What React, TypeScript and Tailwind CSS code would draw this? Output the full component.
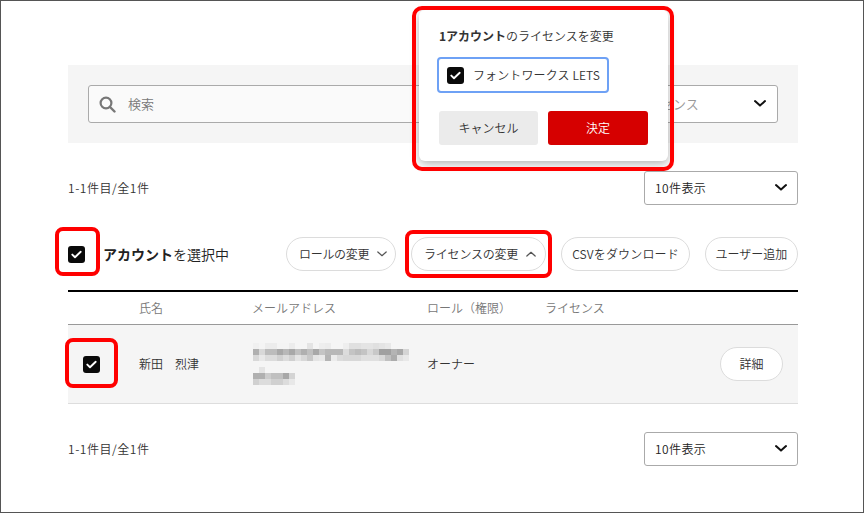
import React from "react";

const font = { fontFamily: '"Noto Sans CJK JP", "Noto Sans", sans-serif' };

function Check({ size = 17 }: { size?: number }) {
  return (
    <span className="inline-flex items-center justify-center rounded-[3px] bg-[#0a0a0a] shrink-0" style={{ width: size, height: size }}>
      <svg width="11" height="9" viewBox="0 0 11 9" fill="none">
        <path d="M1.3 4.6 4 7.2 9.7 1.8" stroke="#fff" strokeWidth="1.9" strokeLinecap="round" strokeLinejoin="round" />
      </svg>
    </span>
  );
}

function Chevron({ up = false, w = 12, color = "#111", sw = 2 }: { up?: boolean; w?: number; color?: string; sw?: number }) {
  return (
    <svg width={w} height={w * 0.6} viewBox="0 0 12 7" fill="none">
      <path d={up ? "M1 6 6 1.5 11 6" : "M1 1 6 5.5 11 1"} stroke={color} strokeWidth={sw} strokeLinecap="round" strokeLinejoin="round" />
    </svg>
  );
}

function Pill({ children, className = "" }: { children: React.ReactNode; className?: string }) {
  return (
    <div className={`h-[34px] rounded-full border border-[#dcdcdc] bg-white flex items-center text-[12px] text-[#333] whitespace-nowrap ${className}`}>
      {children}
    </div>
  );
}

function PageSelect() {
  return (
    <div className="w-[154px] h-[34px] border border-[#aaa] rounded-[3px] bg-white flex items-center justify-between pl-[10px] pr-[10px] text-[12px] text-[#222]">
      <span className="tracking-[0.4px]">10件表示</span>
      <Chevron />
    </div>
  );
}

const mosaicRows: { y: number; cells: string[] }[] = [
  { y: 0, cells: ["f0","f4","ec","ec","f4","f4","ec","f5","f5","e4","f5","ee","ec","f5","f5","ee","e0","e0","e4","e4","e0","e4","e8","f5","f5","f5"] },
  { y: 6, cells: ["b0","d8","bc","bc","a8","b8","a8","c0","b0","c0","a8","c4","b8","b8","b8","dc","c4","bc","c4","d8","c8","a0","a0","b4","a8","d4"] },
  { y: 12, cells: ["d8","e8","dc","dc","d0","dc","d0","e4","d8","c8","e4","e8","b4","ec","dc","d8","d8","d8","e0","e0","e0","d8","c0","ac","e0","e8"] },
  { y: 24, cells: ["f5","e4"] },
  { y: 30, cells: ["b0","b0","cc","c0","c0","a8","d4"] },
  { y: 36, cells: ["d0","dc","dc","d0","d0","dc","e8"] },
];

function Mosaic() {
  return (
    <svg width="156" height="42" viewBox="0 0 156 42" className="block ml-px">
      {mosaicRows.map((r) =>
        r.cells.map((c, i) => <rect key={`${r.y}-${i}`} x={i * 6} y={r.y} width="6" height="6" fill={`#${c}${c}${c}`} />)
      )}
    </svg>
  );
}

export default function App() {
  return (
    <div style={font} className="relative w-[864px] h-[513px] bg-white border border-[#555] overflow-hidden font-[350]">
      <div className="pt-[64px] pl-[67px] pr-[65px]">
        <div className="h-[78px] bg-[#f5f5f5] px-[20px] flex items-center gap-[10px]">
          <div className="w-[340px] flex-1 h-[38px] border border-[#aaa] rounded-[3px] bg-[#fafafa] flex items-center pl-[10px] gap-[12px] text-[13px] text-[#777]">
            <svg width="17" height="17" viewBox="0 0 17 17" fill="none">
              <circle cx="7" cy="7" r="5.4" stroke="#777" strokeWidth="2.2" />
              <path d="M11 11l4.5 4.5" stroke="#777" strokeWidth="2.4" strokeLinecap="round" />
            </svg>
            <span>検索</span>
          </div>
          <div className="w-[280px] h-[38px] border border-[#aaa] rounded-[3px] bg-white flex items-center justify-between pr-[11px] text-[13px] text-[#999]">
            <span className="pl-[135px]">ライセンス</span>
            <Chevron />
          </div>
        </div>

        <div className="mt-[28px] h-[34px] flex items-center justify-between text-[12px] text-[#333]">
          <span className="tracking-[0.55px]">1-1件目/全1件</span>
          <PageSelect />
        </div>

        <div className="mt-[32px] h-[34px] flex items-center">
          <Check />
          <div className="ml-[18px] text-[14px] text-[#222] whitespace-nowrap">
            <span className="font-bold">アカウント</span>を選択中
          </div>
          <div className="ml-auto flex items-center gap-[15px]">
            <Pill className="w-[110px] pl-[12px] gap-[8px]"><span className="tracking-[-0.3px]">ロールの変更</span><Chevron w={10} color="#555" sw={1.5} /></Pill>
            <Pill className="w-[135px] pl-[12px] gap-[8px]"><span className="tracking-[-0.2px]">ライセンスの変更</span><Chevron up w={10} color="#555" sw={1.5} /></Pill>
            <Pill className="w-[129px] justify-center"><span className="tracking-[0.15px]">CSVをダウンロード</span></Pill>
            <Pill className="w-[93px] justify-center">ユーザー追加</Pill>
          </div>
        </div>

        <div className="mt-[19px] border-t-2 border-black">
          <div className="h-[33px] border-b border-[#999] flex items-center text-[12px] text-[#777]">
            <span className="ml-[71px] w-[113px]">氏名</span>
            <span className="w-[175px]">メールアドレス</span>
            <span className="w-[118px]">ロール（権限）</span>
            <span>ライセンス</span>
          </div>
          <div className="h-[79px] bg-[#f5f5f5] border-b border-[#ddd] flex items-center text-[12px] text-[#333]">
            <span className="ml-[15px] flex"><Check /></span>
            <span className="ml-[39px] w-[113px] whitespace-pre">新田　烈津</span>
            <span className="w-[175px]"><Mosaic /></span>
            <span>オーナー</span>
            <Pill className="ml-auto mr-[15px] w-[63px] justify-center">詳細</Pill>
          </div>
        </div>

        <div className="mt-[28px] h-[34px] flex items-center justify-between text-[12px] text-[#333]">
          <span className="tracking-[0.55px]">1-1件目/全1件</span>
          <PageSelect />
        </div>
      </div>

      {/* popover */}
      <div className="absolute left-[418px] top-[9px] w-[249px] h-[151px] bg-white rounded-[6px] shadow-[0_3px_10px_rgba(0,0,0,0.3)] pt-[17px] pl-[20px]">
        <div className="text-[12px] text-[#333] leading-[18px]"><span className="font-bold">1アカウント</span>のライセンスを変更</div>
        <div className="mt-[12px] w-[172px] h-[36px] border-2 border-[#6ea1f5] rounded-[4px] flex items-center pl-[8px] gap-[9px] text-[12px] text-[#333] whitespace-nowrap -ml-[2px]">
          <Check />
          <span className="tracking-[0.12px]">フォントワークス LETS</span>
        </div>
        <div className="mt-[18px] flex gap-[10px] text-[12px]">
          <div className="w-[99px] h-[34px] rounded-[3px] bg-[#ebebeb] text-[#333] flex items-center justify-center">キャンセル</div>
          <div className="w-[100px] h-[34px] rounded-[3px] bg-[#d60000] text-white flex items-center justify-center">決定</div>
        </div>
      </div>

      {/* red annotations */}
      <div className="absolute left-[411px] top-[5px] w-[262px] h-[165px] border-[4px] border-[#ff0000] rounded-[10px]" />
      <div className="absolute left-[54px] top-[226px] w-[45px] h-[49px] border-[4px] border-[#ff0000] rounded-[8px]" />
      <div className="absolute left-[404px] top-[229px] w-[147px] h-[48px] border-[4px] border-[#ff0000] rounded-[8px]" />
      <div className="absolute left-[64px] top-[337px] w-[53px] h-[50px] border-[4px] border-[#ff0000] rounded-[8px]" />
    </div>
  );
}
